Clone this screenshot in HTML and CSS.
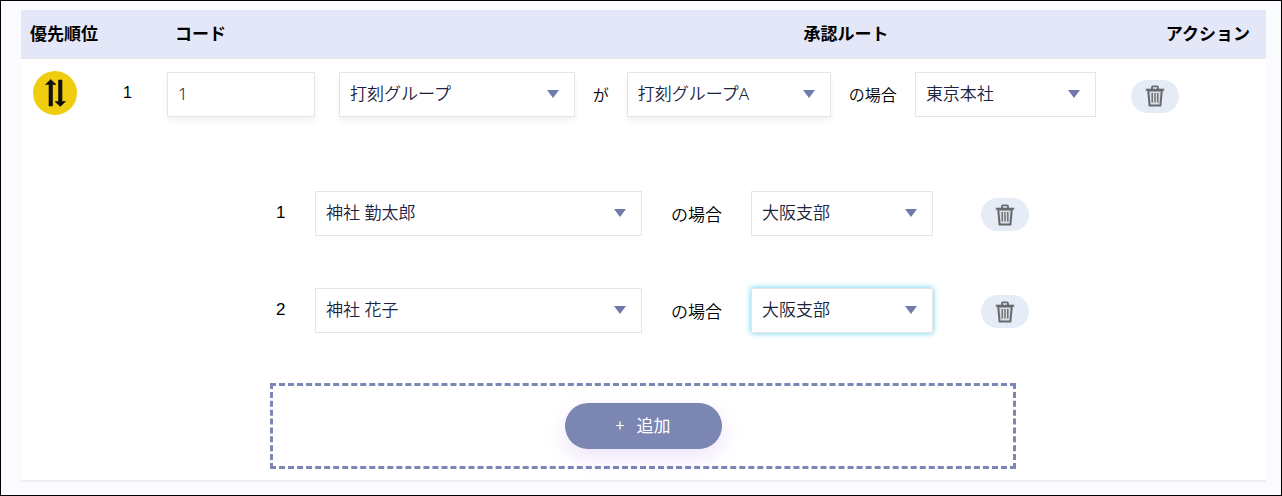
FILE: index.html
```html
<!DOCTYPE html>
<html lang="ja">
<head>
    <meta charset="UTF-8">
    <meta name="viewport" content="width=device-width, initial-scale=1">
    <title>承認ルート</title>
    <link rel="stylesheet" href="styles.css">
</head>
<body>
<svg width="0" height="0" class="sprite" aria-hidden="true">
    <symbol id="trash" viewBox="0 0 20 22">
        <path d="M3.2 5.5 L4.6 20.6 H15.4 L16.8 5.5 Z" fill="#dadfe6" stroke="#66696c" stroke-width="2" stroke-linejoin="round"/>
        <path d="M7 4 V2.4 Q7 1.4 8 1.4 H12 Q13 1.4 13 2.4 V4" fill="none" stroke="#66696c" stroke-width="1.8"/>
        <path d="M0.8 4.7 H19.2" stroke="#66696c" stroke-width="2"/>
        <path d="M7.2 8 V17.5 M10 8 V17.5 M12.8 8 V17.5" stroke="#66696c" stroke-width="1.4"/>
    </symbol>
</svg>

<table class="route-table">
    <thead>
        <tr>
            <th class="col-priority">優先順位</th>
            <th class="col-code">コード</th>
            <th class="col-route">承認ルート</th>
            <th class="col-action">アクション</th>
        </tr>
    </thead>
    <tbody>
        <tr class="main-row">
            <td>
                <div class="priority">
                    <button type="button" class="sort-btn" aria-label="並べ替え">
                        <svg viewBox="0 0 44 44" width="44" height="44">
                            <path d="M16 35 V13.5 H12.5 L17.7 8.5 L23 13.5 H19.5 V35 Z" fill="#111" stroke="#111" stroke-width="0.6" stroke-linejoin="round"/>
                            <path d="M25.5 9 V30.5 H22 L27.3 35.5 L32.5 30.5 H29 V9 Z" fill="#111" stroke="#111" stroke-width="0.6" stroke-linejoin="round"/>
                        </svg>
                    </button>
                    <span>1</span>
                </div>
            </td>
            <td class="code-cell"><input type="text" class="field raised" value="1" aria-label="コード"></td>
            <td class="route-cell">
                <div class="route-line">
                    <select class="field select raised" aria-label="条件"><option>打刻グループ</option></select>
                    <span>が</span>
                    <select class="field select raised" aria-label="グループ"><option>打刻グループA</option></select>
                    <span>の場合</span>
                    <select class="field select" aria-label="承認ルート"><option>東京本社</option></select>
                </div>
            </td>
            <td class="action-cell">
                <button type="button" class="delete-btn" aria-label="削除"><svg width="20" height="22"><use href="#trash"/></svg></button>
            </td>
        </tr>
        <tr>
            <td colspan="4" class="sub-cell">
                <div class="sub-list">
                    <div class="sub-line">
                        <span class="number">1</span>
                        <select class="field select" aria-label="従業員"><option>神社 勤太郎</option></select>
                        <span class="case">の場合</span>
                        <select class="field select" aria-label="承認ルート"><option>大阪支部</option></select>
                        <button type="button" class="delete-btn" aria-label="削除"><svg width="20" height="22"><use href="#trash"/></svg></button>
                    </div>
                    <div class="sub-line">
                        <span class="number">2</span>
                        <select class="field select" aria-label="従業員"><option>神社 花子</option></select>
                        <span class="case">の場合</span>
                        <select class="field select active" aria-label="承認ルート"><option>大阪支部</option></select>
                        <button type="button" class="delete-btn" aria-label="削除"><svg width="20" height="22"><use href="#trash"/></svg></button>
                    </div>
                </div>
                <div class="add-box">
                    <button type="button" class="add-btn"><span class="plus">+</span>追加</button>
                </div>
            </td>
        </tr>
    </tbody>
</table>
</body>
</html>
```
FILE: styles.css
```css
* {
    box-sizing: border-box;
}
body {
    margin: 0;
    min-height: 100vh;
    padding: 9px 15px 13px 20px;
    border: 1px solid #000;
    background: #fafbfe;
    color: #000;
    font-family: "Liberation Sans", "Noto Sans CJK JP", sans-serif;
    font-size: 17px;
    font-weight: 350;
}
.sprite {
    position: absolute;
}
.route-table {
    width: 100%;
    table-layout: fixed;
    border-collapse: collapse;
    background: #fff;
    border-bottom: 2px solid #eee;
}
th {
    height: 48px;
    padding: 0 0 2px;
    background: #e4e7f7;
    border-bottom: 1px solid #e2e3e8;
    font-family: "Noto Sans CJK JP", sans-serif;
    font-weight: bold;
    line-height: 24px;
    white-space: nowrap;
}
td {
    padding: 0;
    vertical-align: top;
}
.col-priority {
    width: 136px;
    padding-left: 9px;
    text-align: left;
}
.col-code {
    width: 172px;
    padding-left: 18px;
    text-align: left;
}
.col-route {
    padding-left: 242px;
}
.col-action {
    width: 145px;
    padding-right: 16px;
    text-align: right;
}
.main-row td {
    padding-top: 13px;
    font-size: 16px;
}
.main-row td:first-child {
    padding-top: 12px;
}
.priority {
    display: flex;
    align-items: center;
    gap: 46px;
    padding-left: 12px;
}
.sort-btn {
    width: 44px;
    height: 44px;
    padding: 0;
    border: none;
    border-radius: 50%;
    background: #f0cd0f;
    cursor: pointer;
}
.sort-btn svg {
    display: block;
}
.main-row .code-cell {
    padding-left: 10px;
    padding-right: 14px;
}
.main-row .route-cell {
    padding-left: 10px;
    padding-right: 25px;
}
.main-row .action-cell {
    padding-top: 21px;
    padding-left: 10px;
}
.field {
    width: 100%;
    min-width: 0;
    height: 45px;
    padding: 0 10px 2px;
    border: 1px solid #e4e5e7;
    border-radius: 0;
    background: #fff;
    color: #1c2340;
    font-family: "Noto Sans", "Noto Sans CJK JP", sans-serif;
    font-size: 17px;
    font-weight: 350;
    outline: none;
}
.select {
    appearance: none;
    padding-right: 34px;
    background: #fff url("data:image/svg+xml,%3Csvg xmlns='http://www.w3.org/2000/svg' width='12' height='8'%3E%3Cpath d='M0 0H12L6 8Z' fill='%236f79aa'/%3E%3C/svg%3E") no-repeat right 15px center;
}
.raised {
    box-shadow: 0 4px 6px rgba(0,0,0,0.05);
}
.active {
    box-shadow: 0 0 6px #5ccdee;
}
.route-line {
    display: grid;
    grid-template-columns: 237fr auto 205fr auto 182fr;
    align-items: center;
    gap: 18px;
}
.route-line span, .case {
    white-space: nowrap;
}
.sub-cell {
    padding: 74px 237px 11px 249px;
}
.sub-list {
    display: flex;
    flex-direction: column;
    gap: 52px;
    margin-bottom: 50px;
}
.sub-line {
    display: grid;
    grid-template-columns: 45px 327fr auto 182fr auto;
    align-items: center;
}
.number {
    padding-left: 6px;
}
.case {
    margin: 0 29px;
}
.delete-btn {
    display: flex;
    align-items: center;
    justify-content: center;
    width: 48px;
    height: 33px;
    padding: 0;
    border: none;
    border-radius: 17px;
    background: #e5ecf6;
    cursor: pointer;
}
.sub-line .delete-btn {
    margin-top: 3px;
    margin-left: 48px;
}
.add-box {
    display: flex;
    justify-content: center;
    margin-right: 13px;
    padding: 17px;
    border: 3px dashed #7a86b4;
}
.add-btn {
    display: flex;
    align-items: center;
    justify-content: center;
    gap: 12px;
    width: 157px;
    height: 46px;
    padding-bottom: 4px;
    border: none;
    border-radius: 23px;
    background: #7b86b2;
    color: #fff;
    box-shadow: 0 8px 22px rgba(125,60,230,0.14);
    font-family: "Noto Sans CJK JP", sans-serif;
    font-size: 17px;
    cursor: pointer;
}
.plus {
    font-size: 16px;
}
```
